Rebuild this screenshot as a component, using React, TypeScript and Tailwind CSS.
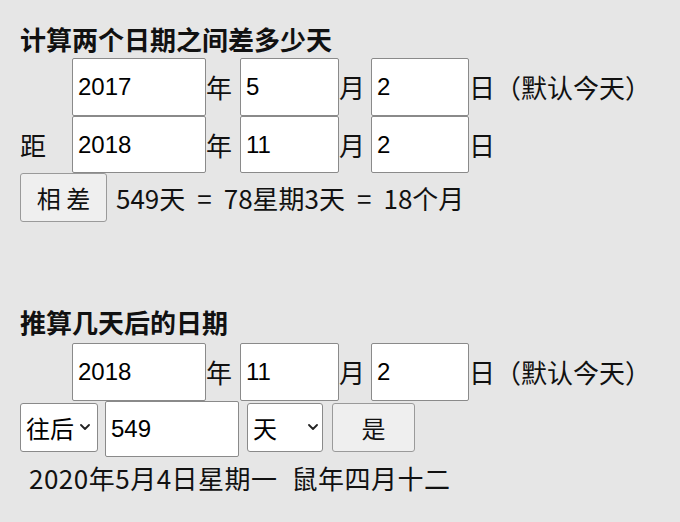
import React from "react";

const inputCls =
  "box-border border border-[#8a8a8a] rounded-[2px] bg-white pl-[5px] text-[24px] text-black font-['Liberation_Sans','Noto_Sans_CJK_SC',sans-serif] outline-none";

const btnCls =
  "box-border border border-[#9a9a9a] rounded-[3px] bg-[#efefef] text-[24px] text-[#111] leading-none";

function Chevron() {
  return (
    <svg width="10" height="6" viewBox="0 0 10 6" fill="none">
      <path d="M1 1l4 4 4-4" stroke="#222" strokeWidth="1.8" strokeLinecap="round" strokeLinejoin="round" />
    </svg>
  );
}

export default function App() {
  return (
    <div className="min-h-[522px] w-full bg-[#e6e6e6] px-5 pt-6 text-[26px] text-[#111] font-['Noto_Sans_CJK_SC','Liberation_Sans',sans-serif]">
      {/* 日期差 */}
      <div className="h-[30px] leading-[30px] font-bold">计算两个日期之间差多少天</div>

      <div className="mt-1 flex h-[58px] items-center">
        <span className="w-[52px]" />
        <input className={`${inputCls} h-[58px] w-[134px]`} defaultValue="2017" />
        <span className="w-[34px] leading-none">年</span>
        <input className={`${inputCls} h-[58px] w-[99px]`} defaultValue="5" />
        <span className="w-[32px] leading-none">月</span>
        <input className={`${inputCls} h-[58px] w-[98px]`} defaultValue="2" />
        <span className="leading-none">日（默认今天）</span>
      </div>

      <div className="flex h-[57px] items-center">
        <span className="w-[52px] leading-none">距</span>
        <input className={`${inputCls} h-[57px] w-[134px]`} defaultValue="2018" />
        <span className="w-[34px] leading-none">年</span>
        <input className={`${inputCls} h-[57px] w-[99px]`} defaultValue="11" />
        <span className="w-[32px] leading-none">月</span>
        <input className={`${inputCls} h-[57px] w-[98px]`} defaultValue="2" />
        <span className="leading-none">日</span>
      </div>

      <div className="flex h-[49px] items-center">
        <button className={`${btnCls} h-[49px] w-[87px]`}>相 差</button>
        <span className="ml-[9px] leading-none">
          549天<span className="px-[12px]">=</span>78星期3天<span className="px-[12px]">=</span>18个月
        </span>
      </div>

      {/* 推算日期 */}
      <div className="mt-[85px] h-[30px] leading-[30px] font-bold">推算几天后的日期</div>

      <div className="mt-[6px] flex h-[58px] items-center">
        <span className="w-[52px]" />
        <input className={`${inputCls} h-[58px] w-[134px]`} defaultValue="2018" />
        <span className="w-[34px] leading-none">年</span>
        <input className={`${inputCls} h-[58px] w-[99px]`} defaultValue="11" />
        <span className="w-[32px] leading-none">月</span>
        <input className={`${inputCls} h-[58px] w-[98px]`} defaultValue="2" />
        <span className="leading-none">日（默认今天）</span>
      </div>

      <div className="flex h-[56px] items-start">
        <div className="relative mt-[2px]">
          <select className="box-border h-[49px] w-[78px] appearance-none rounded-[3px] border border-[#8a8a8a] bg-white pl-[5px] text-[24px] text-black outline-none">
            <option>往后</option>
            <option>往前</option>
          </select>
          <span className="pointer-events-none absolute right-[8px] top-[21px] flex">
            <Chevron />
          </span>
        </div>
        <input className={`${inputCls} ml-[7px] h-[56px] w-[134px]`} defaultValue="549" />
        <div className="relative ml-[8px] mt-[2px]">
          <select className="box-border h-[49px] w-[76px] appearance-none rounded-[3px] border border-[#8a8a8a] bg-white pl-[5px] text-[24px] text-black outline-none">
            <option>天</option>
            <option>周</option>
            <option>月</option>
          </select>
          <span className="pointer-events-none absolute right-[5px] top-[21px] flex">
            <Chevron />
          </span>
        </div>
        <button className={`${btnCls} ml-[9px] mt-[2px] h-[49px] w-[83px]`}>是</button>
      </div>

      <div className="mt-[6px] h-[30px] pl-[9px] leading-[30px] tracking-[0.5px]">
        2020年5月4日星期一<span className="pl-[14px]">鼠年四月十二</span>
      </div>
    </div>
  );
}
